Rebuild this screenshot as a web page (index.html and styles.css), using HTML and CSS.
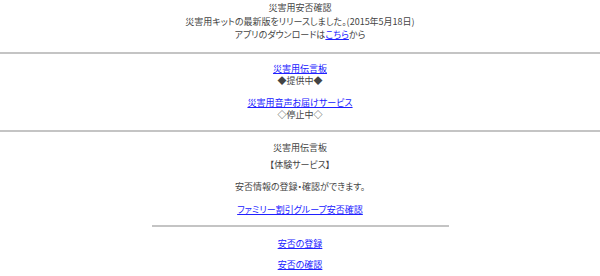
FILE: index.html
```html
<!DOCTYPE html>
<html lang="ja">
<head>
<meta charset="utf-8">
<title>災害用安否確認</title>
<link rel="stylesheet" href="styles.css">
</head>
<body>
<div class="page">
  <header class="head">
    <h1 class="title">災害用安否確認</h1>
    <p class="notice">災害用キットの最新版をリリースしました。(2015年5月18日)<br>アプリのダウンロードは<a href="#">こちら</a>から</p>
  </header>
  <hr class="rule">
  <section class="services">
    <div class="svc">
      <a href="#">災害用伝言板</a>
      <div>◆提供中◆</div>
    </div>
    <div class="svc">
      <a href="#">災害用音声お届けサービス</a>
      <div>◇停止中◇</div>
    </div>
  </section>
  <hr class="rule">
  <section class="board">
    <div class="row r1">災害用伝言板</div>
    <div class="row r2">【体験サービス】</div>
    <div class="row r3">安否情報の登録・確認ができます。</div>
    <div class="row r4"><a href="#">ファミリー割引グループ安否確認</a></div>
    <hr class="rule short">
    <div class="row r5"><a href="#">安否の登録</a></div>
    <div class="row r6"><a href="#">安否の確認</a></div>
  </section>
</div>
</body>
</html>
```
FILE: styles.css
```css
html, body {
  margin: 0;
  padding: 0;
  background: #fff;
}
body {
  font-family: "Noto Sans CJK JP", "Noto Sans", sans-serif;
  font-size: 9px;
  line-height: 12px;
  color: #444;
  text-align: center;
  font-feature-settings: "palt";
}
a {
  color: #2020ff;
  text-decoration: underline;
}
.head {
  padding-top: 2px;
}
.title {
  margin: 0;
  font-size: 9px;
  font-weight: normal;
  line-height: 12px;
}
.notice {
  margin: 1px 0 0;
  line-height: 13px;
}
.rule {
  margin: 11px 0 0;
  border: 0;
  height: 2px;
  background: #c4c4c4;
}
.services {
  padding-top: 9px;
  display: flex;
  flex-direction: column;
  gap: 10px;
}
.svc {
  display: flex;
  flex-direction: column;
}
.services + .rule {
  margin-top: 9px;
}
.board {
  padding-top: 10px;
  display: flex;
  flex-direction: column;
  align-items: center;
}
.row {
  line-height: 12px;
}
.r2 { margin-top: 5px; }
.r3 { margin-top: 10px; }
.r4 { margin-top: 11px; }
.rule.short {
  width: 297px;
  margin: 9px 0 0;
}
.r5 { margin-top: 11px; }
.r6 { margin-top: 9px; }
```
